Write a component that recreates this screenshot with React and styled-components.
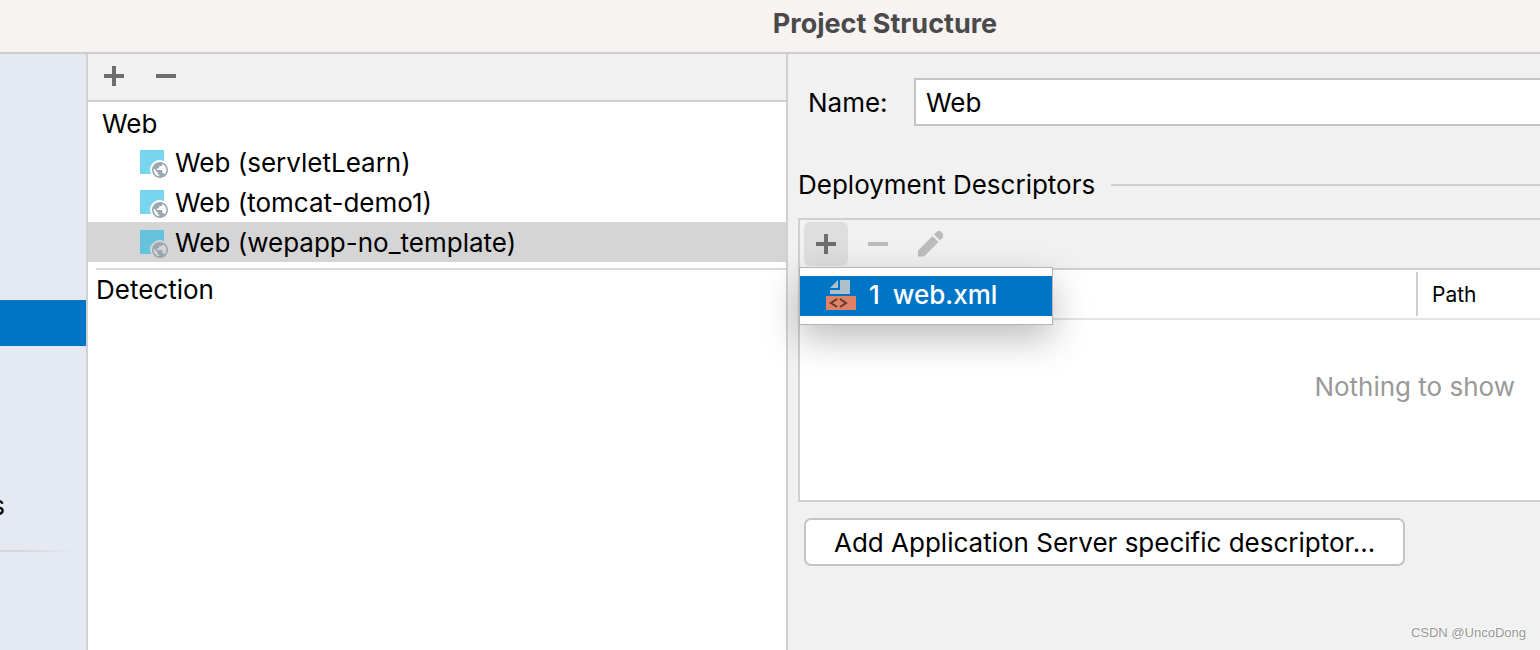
import React, { useState } from "react";
import styled, { createGlobalStyle } from "styled-components";

const COLORS = {
    text: "#000000",
    muted: "#999999",
    panel: "#f1f1f1",
    sidebar: "#e5e9f2",
    line: "#d0d0d0",
    control: "#c4c4c4",
    accent: "#0075c6",
    icon: "#6e6e6e",
};

const FACETS = [
    "Web (servletLearn)",
    "Web (tomcat-demo1)",
    "Web (wepapp-no_template)",
];

const PlusIcon = () => (
    <svg width="20" height="20" viewBox="0 0 20 20" fill="currentColor">
        <path d="M8 0h4v8h8v4h-8v8H8v-8H0V8h8z" />
    </svg>
);

const MinusIcon = () => (
    <svg width="20" height="20" viewBox="0 0 20 20" fill="currentColor">
        <path d="M0 8h20v4H0z" />
    </svg>
);

const PencilIcon = () => (
    <svg width="26" height="26" viewBox="-1 1 26 26" fill="currentColor">
        <path d="M0 20.500 14.500 6 20.500 12 6 26.500H0z" />
        <path d="M16 4.500 19.300 1.200Q21 0 22.500 1.200L25 3.700Q26.200 5.500 25 7.200L22 10.500z" />
    </svg>
);

const FacetIcon = ({ selected }) => (
    <svg width="28" height="28" viewBox="0 0 28 28">
        <path
            d="M0 0H24V11.200A9.500 9.500 0 0 0 11.200 24H0z"
            fill={selected ? "#66c3dd" : "#77d5f0"}
        />
        <path
            transform="translate(10.4 10.4) scale(0.8)"
            d="M12 2C6.480 2 2 6.480 2 12s4.480 10 10 10 10-4.480 10-10S17.520 2 12 2zm-1 17.930c-3.950-.49-7-3.850-7-7.930 0-.62.08-1.210.21-1.790L9 15v1c0 1.100.9 2 2 2v1.930zm6.900-2.540c-.26-.81-1-1.390-1.900-1.390h-1v-3c0-.55-.45-1-1-1H8v-2h2c.55 0 1-.45 1-1V7h2c1.100 0 2-.9 2-2v-.41c2.930 1.190 5 4.060 5 7.410 0 2.080-.8 3.970-2.100 5.390z"
            fill="#9aa7b0"
        />
    </svg>
);

const XmlIcon = () => (
    <svg width="30" height="30" viewBox="0 0 30 30">
        <path d="M4 8 12 0V8z M14 0H24V14H4V10H14z" fill="#afbfc9" />
        <path d="M0 16H30V30H0z" fill="#e08065" />
        <path d="M11 19 5 23 11 27 M14 19 20 23 14 27" fill="none" stroke="#5b3b35" strokeWidth="2" />
    </svg>
);

const App = () => {
    const [name, setName] = useState("Web");
    const [current, setCurrent] = useState(2);

    return (
        <Dialog>
            <GlobalStyle />
            <TitleBar>Project Structure</TitleBar>
            <Body>
                <Sidebar>
                    <SelectedEntry />
                    <ClippedEntry>s</ClippedEntry>
                    <FadingRule />
                </Sidebar>
                <FacetPanel>
                    <FacetToolbar>
                        <ToolButton aria-label="Add facet"><PlusIcon /></ToolButton>
                        <ToolButton aria-label="Remove facet"><MinusIcon /></ToolButton>
                    </FacetToolbar>
                    <GroupRow>Web</GroupRow>
                    {FACETS.map((facet, i) => (
                        <FacetRow
                            key={facet}
                            selected={i === current}
                            onClick={() => setCurrent(i)}
                        >
                            <FacetIcon selected={i === current} />
                            {facet}
                        </FacetRow>
                    ))}
                    <TreeRule />
                    <DetectionRow>Detection</DetectionRow>
                </FacetPanel>
                <Editor>
                    <NameRow>
                        <NameLabel htmlFor="facet-name">Name:</NameLabel>
                        <NameInput
                            id="facet-name"
                            type="text"
                            value={name}
                            onChange={(ev) => setName(ev.target.value)}
                        />
                    </NameRow>
                    <SectionTitle>Deployment Descriptors</SectionTitle>
                    <Descriptors>
                        <DescriptorToolbar>
                            <ToolButton active aria-label="Add descriptor"><PlusIcon /></ToolButton>
                            <ToolButton disabled aria-label="Remove descriptor"><MinusIcon /></ToolButton>
                            <ToolButton disabled aria-label="Edit descriptor"><PencilIcon /></ToolButton>
                        </DescriptorToolbar>
                        <Table>
                            <thead>
                                <tr>
                                    <HeadCell />
                                    <PathCell><span>Path</span></PathCell>
                                </tr>
                            </thead>
                            <tbody>
                                <tr>
                                    <EmptyCell colSpan="2">Nothing to show</EmptyCell>
                                </tr>
                            </tbody>
                        </Table>
                        <Popup>
                            <PopupItem>
                                <XmlIcon />
                                <span>1</span>
                                <span>web.xml</span>
                            </PopupItem>
                        </Popup>
                    </Descriptors>
                    <AddButton>Add Application Server specific descriptor...</AddButton>
                </Editor>
            </Body>
            <Watermark>CSDN @UncoDong</Watermark>
        </Dialog>
    );
};

const GlobalStyle = createGlobalStyle`
* {
    box-sizing: border-box;
}
body {
    margin: 0;
    color: ${COLORS.text};
    font-family: Inter, "Liberation Sans", sans-serif;
    font-size: 26px;
    line-height: 40px;
}
button, input {
    font: inherit;
    color: inherit;
}
svg {
    display: block;
    flex: none;
}
`;

const Dialog = styled.div`
position: relative;
display: flex;
flex-direction: column;
min-height: 100vh;
overflow: hidden;
`;

const TitleBar = styled.header`
height: 54px;
padding: 4px 0 0 230px;
background: #f8f3f3;
border-bottom: 2px solid #cdcdcd;
color: #4a4a4a;
font-size: 27px;
font-weight: 700;
text-align: center;
`;

const Body = styled.div`
flex: 1;
display: flex;
`;

const Sidebar = styled.nav`
flex: 0 0 88px;
padding-top: 246px;
background: ${COLORS.sidebar};
border-right: 2px solid ${COLORS.line};
`;

const SelectedEntry = styled.div`
height: 46px;
background: ${COLORS.accent};
`;

/* only the tail of the entry stays inside the window */
const ClippedEntry = styled.div`
display: flex;
justify-content: flex-end;
width: 5px;
margin-top: 140px;
overflow: hidden;
`;

const FadingRule = styled.div`
height: 2px;
width: 74px;
margin-top: 24px;
background: linear-gradient(to right, #d4d6da 30%, ${COLORS.sidebar});
`;

const FacetPanel = styled.section`
flex: 0 0 700px;
background: white;
border-right: 2px solid ${COLORS.line};
`;

const FacetToolbar = styled.div`
display: flex;
align-items: center;
gap: 8px;
height: 48px;
padding: 0 4px 2px;
background: ${COLORS.panel};
border-bottom: 2px solid ${COLORS.line};
`;

const ToolButton = styled.button.withConfig({
    shouldForwardProp: (prop) => prop !== "active",
})`
display: flex;
align-items: center;
justify-content: center;
width: 44px;
height: 44px;
padding: 0;
border: none;
border-radius: 6px;
background: ${({ active }) => (active ? "#dedede" : "none")};
color: ${({ disabled }) => (disabled ? "#bcbcbc" : COLORS.icon)};
`;

const GroupRow = styled.div`
height: 40px;
padding: 2px 0 0 14px;
`;

const FacetRow = styled.div.withConfig({
    shouldForwardProp: (prop) => prop !== "selected",
})`
display: flex;
align-items: center;
gap: 7px;
height: 40px;
padding: 2px 0 0 52px;
background: ${({ selected }) => (selected ? "#d5d5d5" : "none")};
svg {
    margin-top: 2px;
}
`;

const TreeRule = styled.div`
height: 2px;
margin: 6px 0 0 8px;
background: #dadada;
`;

const DetectionRow = styled.div`
padding-left: 8px;
`;

const Editor = styled.main`
flex: 1;
min-width: 0;
padding: 24px 0 0 10px;
background: ${COLORS.panel};
`;

const NameRow = styled.div`
display: flex;
align-items: center;
`;

const NameLabel = styled.label`
flex: 0 0 116px;
padding: 2px 0 0 10px;
`;

const NameInput = styled.input`
flex: 1;
min-width: 0;
height: 48px;
padding: 0 10px;
border: 2px solid ${COLORS.control};
border-right: none;
background: white;
outline: none;
`;

const SectionTitle = styled.h2`
display: flex;
align-items: center;
gap: 16px;
margin: 39px 0 13px;
font-size: inherit;
font-weight: 400;
&::after {
    content: "";
    flex: 1;
    height: 2px;
    background: ${COLORS.line};
}
`;

const Descriptors = styled.section`
position: relative;
height: 284px;
background: white;
border: 2px solid ${COLORS.line};
border-right: none;
`;

const DescriptorToolbar = styled.div`
display: flex;
align-items: center;
gap: 8px;
height: 50px;
padding: 0 4px;
background: ${COLORS.panel};
border-bottom: 2px solid ${COLORS.line};
`;

const Table = styled.table`
width: 100%;
border-collapse: separate;
border-spacing: 0;
table-layout: fixed;
`;

const HeadCell = styled.td`
height: 50px;
padding: 0;
border-bottom: 2px solid #e4e4e4;
`;

const PathCell = styled.th`
width: 124px;
padding: 0;
border-bottom: 2px solid #e4e4e4;
font-size: 21px;
font-weight: 400;
text-align: left;
span {
    display: block;
    height: 44px;
    padding-left: 14px;
    border-left: 2px solid ${COLORS.line};
    line-height: 46px;
}
`;

const EmptyCell = styled.td`
padding: 47px 25px 0 0;
color: ${COLORS.muted};
text-align: right;
`;

const Popup = styled.div`
position: absolute;
top: 47px;
left: -1px;
width: 254px;
padding: 8px 0;
background: white;
border: 1px solid #b4b4b4;
box-shadow: 0 14px 36px rgba(0, 0, 0, 0.26);
`;

const PopupItem = styled.button`
display: flex;
align-items: center;
gap: 13px;
width: 100%;
height: 40px;
padding: 0 0 2px 26px;
border: none;
background: ${COLORS.accent};
color: white;
font-weight: 500;
`;

const AddButton = styled.button`
display: block;
height: 48px;
margin: 16px 0 0 6px;
padding: 2px 28px 0;
border: 2px solid ${COLORS.control};
border-radius: 7px;
background: white;
line-height: 42px;
white-space: nowrap;
`;

const Watermark = styled.div`
position: absolute;
right: 14px;
bottom: 8px;
color: #999999;
font-family: "Liberation Sans", sans-serif;
font-size: 13px;
line-height: 18px;
text-shadow: -1px -1px 0 white;
`;

export default App;
